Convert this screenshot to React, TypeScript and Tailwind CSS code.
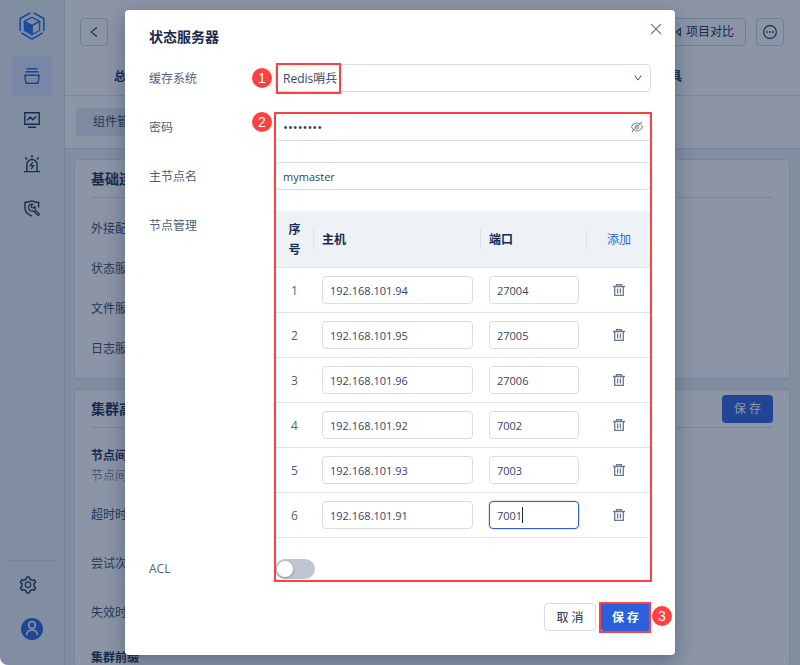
import React from "react";
import { AiOutlineClose, AiOutlineDown, AiOutlineEyeInvisible, AiOutlineLeft, AiOutlineSetting } from "react-icons/ai";

const nodes = [
  { host: "192.168.101.94", port: "27004" },
  { host: "192.168.101.95", port: "27005" },
  { host: "192.168.101.96", port: "27006" },
  { host: "192.168.101.92", port: "7002" },
  { host: "192.168.101.93", port: "7003" },
  { host: "192.168.101.91", port: "7001", focused: true },
];

const fieldClass =
  "block h-7 w-full rounded border border-[#d8dce6] bg-white px-[7px] text-[#344563] outline-none";

function LogoIcon() {
  return (
    <svg width="26" height="28" viewBox="0 0 26 28" fill="none" stroke="#1f6bea" strokeWidth="1.6">
      <path d="M11.300 1 1.200 6.500V19M14.700 1l10.100 5.500V19M2.400 21 13 27l10.600-6" />
      <path d="M13 5.300 20.600 9.400 13 13.500 5.400 9.400z" strokeWidth="1.400" strokeLinejoin="round" />
      <path d="M5.400 9.400 13 13.500v9.200l-7.600-4.200z" fill="#1f6bea" strokeWidth="1.400" strokeLinejoin="round" />
      <path d="M20.600 9.400 13 13.500v9.200l7.600-4.200z" strokeWidth="1.400" strokeLinejoin="round" />
    </svg>
  );
}

function StackIcon() {
  return (
    <svg width="16" height="16" viewBox="0 0 16 16" fill="none" stroke="#2b5fdb" strokeWidth="1.400">
      <path d="M2.700.7h10.600M1.400 3.700h13.200M.8 7.200h14.400l-1.100 8H1.900z" />
    </svg>
  );
}

function MonitorIcon() {
  return (
    <svg width="16" height="16" viewBox="0 0 16 16" fill="none" stroke="currentColor" strokeWidth="1.400">
      <path d="M.8.8h14.400v11.400H.8zM4 15.200h8M3.200 8.200l3-3.200 2.600 2.800 3.600-3.600" />
    </svg>
  );
}

function AlarmIcon() {
  return (
    <svg width="16" height="18" viewBox="0 0 16 18" fill="none" stroke="currentColor" strokeWidth="1.400">
      <path d="M0 16.600h16M2.900 16.400V9.600a5.100 5.100 0 0 1 10.200 0v6.800M8 0v2.800M1.200 2.600l1.900 1.900M14.800 2.600l-1.900 1.900" />
      <path d="M8.800 7 6.400 10.600h3.200L7.200 14" strokeWidth="1.300" />
    </svg>
  );
}

function ToolShieldIcon() {
  return (
    <svg width="17" height="17" viewBox="0 0 17 17" fill="none" stroke="currentColor" strokeWidth="1.400">
      <path d="M14.600 7.500V2.400C11.800 2.300 9.600 1.500 7.800.8 6 1.500 3.800 2.300 1 2.400V8c0 4 3 6.600 6.800 8" />
      <path
        d="M8.700 4.200 7.300 6l.4 1.700 1.700.3 1.500-1.600c.8 1.300.6 2.600-.1 3.400l4.700 4.500-1.300 1.400-4.700-4.700c-2.600.8-5-.9-5-3.500 0-2.300 2-3.900 4.200-3.300z"
        strokeWidth="1.200"
        strokeLinejoin="round"
      />
    </svg>
  );
}

function UserIcon() {
  return (
    <svg width="22" height="22" viewBox="0 0 22 22" fill="none">
      <circle cx="11" cy="11" r="11" fill="#2b5fdb" />
      <g stroke="#fff" strokeWidth="1.500">
        <circle cx="11" cy="7" r="3.300" />
        <path d="M5.500 17.200c.2-3.300 2.500-5.200 5.500-5.200s5.300 1.900 5.500 5.200" />
      </g>
    </svg>
  );
}

function CompareIcon() {
  return (
    <svg width="14" height="14" viewBox="0 0 14 14" fill="none" stroke="currentColor" strokeWidth="1.200">
      <path d="M5.500 1v12M.6 4v6l2.700-3zM12.300 3.500v7L8.300 7z" />
    </svg>
  );
}

function MoreIcon() {
  return (
    <svg width="14" height="14" viewBox="0 0 14 14" fill="none" stroke="currentColor" strokeWidth="1.100">
      <circle cx="7" cy="7" r="6.400" />
      <path d="M3.200 7h1.600M6.200 7h1.600M9.200 7h1.600" strokeWidth="1.400" />
    </svg>
  );
}

function TrashIcon() {
  return (
    <svg width="12" height="12" viewBox="0 0 12 12" fill="none" stroke="currentColor" strokeWidth="1.300">
      <path d="M0 2.500h12M3.500 2.500V.7h5v1.800M1.700 2.500v8.800h8.600V2.500M4.600 4.500v5M7.400 4.500v5" />
    </svg>
  );
}

function Badge({ n, className }: { n: number; className: string }) {
  return (
    <span
      className={`absolute flex size-5 items-center justify-center rounded-full bg-[#ff4040] font-['Liberation_Sans',sans-serif] text-[14px] leading-5 text-white ${className}`}
    >
      {n}
    </span>
  );
}

function Row({ label, id, children }: { label: string; id?: string; children: React.ReactNode }) {
  return (
    <div className="flex items-start">
      <label htmlFor={id} className="w-[126px] shrink-0 leading-[30px] text-[#505f79]">
        {label}
      </label>
      <div className="relative min-w-0 flex-1">{children}</div>
    </div>
  );
}

function Sidebar() {
  const item = "flex size-10 items-center justify-center rounded";
  return (
    <aside className="flex w-[65px] shrink-0 flex-col items-center border-r border-[#d3dbe8] bg-[#ebf1f5] pt-3">
      <LogoIcon />
      <nav className="mt-4 flex flex-col gap-1">
        <button aria-label="项目" className={`${item} bg-[#d8e3fb]`}><StackIcon /></button>
        <button aria-label="监控" className={item}><MonitorIcon /></button>
        <button aria-label="告警" className={item}><AlarmIcon /></button>
        <button aria-label="运维" className={item}><ToolShieldIcon /></button>
      </nav>
      <div className="mt-auto flex w-12 flex-col gap-[23px] border-t border-[#d3dbe8] pt-[14px] pb-[25px]">
        <button aria-label="设置" className="ml-2.5 h-5 w-5"><AiOutlineSetting size={20} /></button>
        <button aria-label="用户" className="mx-auto"><UserIcon /></button>
      </div>
    </aside>
  );
}

function Background() {
  const outlined = "flex h-7 items-center justify-center rounded border border-[#c9d0de]";
  return (
    <div className="flex h-full bg-[#ebf1f5]">
      <Sidebar />
      <main className="flex min-w-0 flex-1 flex-col">
        <header className="border-b border-[#d8dfea] bg-white pt-[18px]">
          <div className="flex pr-4 pl-[15px]">
            <button aria-label="返回" className={`${outlined} w-7`}><AiOutlineLeft size={14} /></button>
            <button className={`${outlined} ml-auto gap-1 px-[11px]`}><CompareIcon />项目对比</button>
            <button aria-label="更多" className={`${outlined} ml-2.5 w-7`}><MoreIcon /></button>
          </div>
          <nav className="flex justify-between pt-[21px] pr-[118px] pb-2 pl-[49px] leading-5 font-bold">
            <a href="#overview">总览</a>
            <a href="#config">系统配置</a>
            <a href="#nodes">节点管理</a>
            <a href="#tools">工具</a>
          </nav>
        </header>
        <div className="flex border-b border-[#d8dfea] bg-white pt-3 pb-3 pl-[11px]">
          <button className="h-7 rounded bg-[#e4e9f1] px-[17px] text-[#344563]">组件管理</button>
        </div>
        <div className="flex flex-col gap-2.5 pt-2.5 pr-2.5 pl-[9px]">
          <section className="rounded border border-[#d8dfea] bg-white px-4 pb-[9px]">
            <h2 className="border-b border-[#d8dfea] pt-2 pb-[7px] text-[14px] leading-[22px] font-bold">基础连接</h2>
            <ul className="mt-[11px] leading-10 text-[#344563]">
              <li>外接配置库</li>
              <li>状态服务器</li>
              <li>文件服务器</li>
              <li>日志服务器</li>
            </ul>
          </section>
          <section className="rounded border border-[#d8dfea] bg-white px-4">
            <div className="flex items-center border-b border-[#d8dfea] pt-[5px] pb-1">
              <h2 className="text-[14px] leading-[22px] font-bold">集群高级</h2>
              <button className="ml-auto h-7 w-[51px] rounded bg-[#2b5fdb] text-white">保 存</button>
            </div>
            <dl className="mt-[18px] leading-5 text-[#344563]">
              <dt className="font-bold text-[#172b4d]">节点间通信</dt>
              <dd className="text-[#7a869a]">节点间通信</dd>
              <dt className="mt-[19px]">超时时间</dt>
              <dt className="mt-[29px]">尝试次数</dt>
              <dt className="mt-[29px]">失效时间</dt>
              <dt className="mt-[27px] leading-4 font-bold text-[#172b4d]">集群前缀</dt>
            </dl>
          </section>
        </div>
      </main>
    </div>
  );
}

function NodeTable() {
  const head =
    "relative h-14 px-2 pt-[9px] pb-[7px] text-left font-bold text-[#172b4d] after:absolute after:top-[18px] after:right-0 after:h-5 after:w-px after:bg-[#dde2ea]";
  return (
    <table className="w-full table-fixed border-separate border-spacing-0 leading-5">
      <colgroup>
        <col className="w-[39px]" />
        <col />
        <col className="w-[106px]" />
        <col className="w-16" />
      </colgroup>
      <thead>
        <tr className="bg-[#eef2f6] *:border-b *:border-[#dfe2ec]">
          <th className={head}>
            <span className="mx-auto block w-3">序号</span>
          </th>
          <th className={head}>主机</th>
          <th className={head}>端口</th>
          <th className="pt-0.5 text-center font-normal">
            <button className="text-[#2b5fdb]">添加</button>
          </th>
        </tr>
      </thead>
      <tbody>
        {nodes.map((node, i) => (
          <tr key={node.host} className="*:border-b *:border-[#dfe2ec]">
            <td className="pt-0.5 text-center text-[#505f79]">{i + 1}</td>
            <td className="p-2">
              <input aria-label="主机" defaultValue={node.host} className={`${fieldClass} text-[11px]`} />
            </td>
            <td className="p-2">
              {node.focused ? (
                <div className="relative">
                  <input
                    aria-label="端口"
                    defaultValue={node.port}
                    className="block h-7 w-full rounded border border-[#2b5fdb] bg-white px-[7px] text-[11px] text-[#344563] shadow-[0_0_0_1px_#dce7ff] outline-none"
                  />
                  <span className="absolute top-1.5 left-[33px] h-4 w-px bg-[#172b4d]" />
                </div>
              ) : (
                <input aria-label="端口" defaultValue={node.port} className={`${fieldClass} text-[11px]`} />
              )}
            </td>
            <td>
              <button aria-label="删除" className="mx-auto block text-[#6b778c]"><TrashIcon /></button>
            </td>
          </tr>
        ))}
      </tbody>
    </table>
  );
}

function ServerDialog() {
  return (
    <div
      role="dialog"
      aria-labelledby="dialog-title"
      className="relative w-[550px] rounded bg-white px-6 pt-4 pb-6 shadow-[0_6px_20px_rgba(9,30,66,0.35)]"
    >
      <button aria-label="关闭" className="absolute top-[11px] right-[11px] text-[#7a869a]"><AiOutlineClose size={16} /></button>
      <h1 id="dialog-title" className="text-[14px] leading-[22px] font-semibold">状态服务器</h1>

      <form className="mt-4" onSubmit={(e) => e.preventDefault()}>
        <Row label="缓存系统" id="cache">
          <select id="cache" className="block h-7 w-full appearance-none rounded border border-[#d8dce6] bg-white px-[7px] pt-0.5 text-[12px] text-[#344563]">
            <option>Redis哨兵</option>
          </select>
          <AiOutlineDown size={10} className="pointer-events-none absolute top-[9px] right-2" />
          <div className="pointer-events-none absolute -top-px left-px h-[31px] w-[65px] border-2 border-[#ff4040]" />
          <Badge n={1} className="top-1 -left-[23px]" />
        </Row>

        <div className="relative mt-[19px] flex flex-col gap-[19px]">
          <Row label="密码" id="password">
            <input id="password" type="password" defaultValue="password" className={`${fieldClass} text-[13px]`} />
            <button type="button" aria-label="显示密码" className="absolute top-[7px] right-[7px] text-[#7a869a]">
              <AiOutlineEyeInvisible size={14} />
            </button>
          </Row>
          <Row label="主节点名" id="master">
            <input id="master" defaultValue="mymaster" className={`${fieldClass} text-[11px]`} />
          </Row>
          <Row label="节点管理">
            <NodeTable />
          </Row>
          <div className="mt-0.5 flex items-center">
            <label htmlFor="acl" className="w-[126px] leading-5 text-[#505f79]">ACL</label>
            <input
              id="acl"
              type="checkbox"
              className="h-5 w-10 appearance-none rounded-full bg-[#bfc5cf] p-0.5 before:block before:size-4 before:rounded-full before:bg-white before:shadow-[0_1px_3px_rgba(0,35,11,0.3)]"
            />
          </div>
          <div className="pointer-events-none absolute -top-px -right-px -bottom-[3px] left-[125px] border-2 border-[#ff4040]" />
          <Badge n={2} className="-top-px left-[103px]" />
        </div>

        <div className="mt-6 flex justify-end gap-1">
          <button type="button" className="h-7 w-[52px] rounded border border-[#d8dce6] bg-white pt-0.5">取 消</button>
          <div className="relative">
            <button type="submit" className="block h-7 w-[51px] rounded bg-[#2b5fdb] pt-0.5 font-semibold text-white">保 存</button>
            <div className="pointer-events-none absolute -top-px right-0 -bottom-0.5 -left-px border-2 border-[#ff4040]" />
            <Badge n={3} className="top-[3px] left-[52px]" />
          </div>
        </div>
      </form>
    </div>
  );
}

export default function App() {
  return (
    <div className="relative h-screen overflow-hidden rounded-bl-lg font-['Open_Sans','Noto_Sans_CJK_SC',sans-serif] text-[12px] text-[#172b4d]">
      <Background />
      <div className="absolute inset-0 flex items-start justify-center bg-[#172b4d]/50 py-2.5">
        <ServerDialog />
      </div>
    </div>
  );
}
